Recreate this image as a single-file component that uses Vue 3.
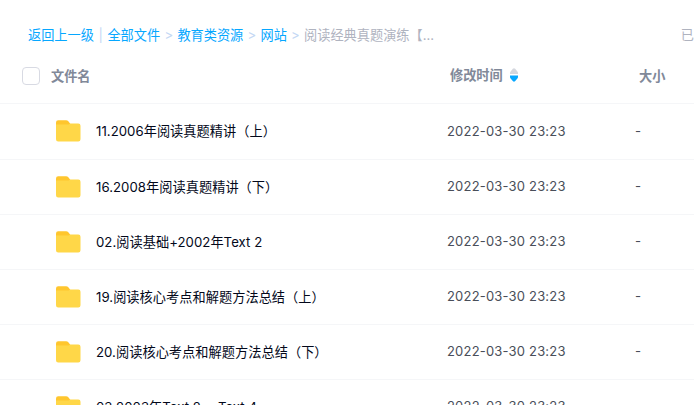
<script setup>
const crumbs = ['全部文件', '教育类资源', '网站']
const files = [
  '11.2006年阅读真题精讲（上）',
  '16.2008年阅读真题精讲（下）',
  '02.阅读基础+2002年Text 2',
  '19.阅读核心考点和解题方法总结（上）',
  '20.阅读核心考点和解题方法总结（下）',
  '03.2003年Text 2、 Text 4',
]
</script>

<template>
  <main class="page">
    <nav class="crumbs">
      <a>返回上一级</a><span class="bar">|</span>
      <template v-for="c in crumbs" :key="c"><a>{{ c }}</a><span class="gt">&gt;</span></template>
      <span class="current">阅读经典真题演练【...</span>
      <span class="loaded">已</span>
    </nav>
    <header class="head">
      <span class="check"></span>
      <span class="h-name">文件名</span>
      <span class="h-time">修改时间
        <svg class="sort" width="8" height="14" viewBox="0 0 8 14">
          <path d="M0 6V5Q0 4.2.6 3.4L2.8.7Q4-.4 5.2.7L7.4 3.4Q8 4.2 8 5V6Z" fill="#d4d7de" />
          <path d="M0 7.5H8V9Q8 9.8 7.4 10.5L5.2 13.1Q4 14.3 2.8 13.1L.6 10.5Q0 9.8 0 9Z" fill="#06a7ff" />
        </svg>
      </span>
      <span class="h-size">大小</span>
    </header>
    <section class="list">
      <div v-for="f in files" :key="f" class="row">
        <svg class="folder" width="26" height="22" viewBox="0 0 26 22">
          <path d="M1 2.5Q1 .3 3.2.3H11Q12.5.3 13.5 1.5L15.5 4V10H1Z" fill="#ffc62e" />
          <path d="M1 4.5H12.8Q13.5 4.5 14.2 4Q14.9 3.5 15.7 3.5H23.3Q25.5 3.5 25.5 5.7V19.3Q25.5 21.5 23.3 21.5H3.2Q1 21.5 1 19.3Z" fill="#ffd748" />
        </svg>
        <span class="name">{{ f }}</span>
        <span class="time">2022-03-30 23:23</span>
        <span class="size">-</span>
      </div>
    </section>
  </main>
</template>

<style>
body { background: #fff; }
</style>

<style scoped>
.page {
  width: 694px;
  height: 405px;
  overflow: hidden;
  font-family: Inter, "Noto Sans CJK SC", sans-serif;
  font-size: 13.2px;
  line-height: 20px;
  white-space: nowrap;
}
.crumbs {
  display: flex;
  height: 20px;
  padding: 25px 0 0 28px;
  color: #afb3bf;
}
.crumbs a { color: #06a7ff; }
.bar { width: 13.5px; text-align: center; color: #c4d8f4; }
.gt { width: 17.2px; text-align: center; color: #c4d8f4; }
.loaded { margin-left: auto; }
.head {
  display: flex;
  align-items: center;
  height: 55px;
  padding: 6px 0 0 22px;
  box-sizing: border-box;
  color: #818999;
  font-weight: 700;
}
.check {
  box-sizing: border-box;
  width: 18px;
  height: 18px;
  margin-right: 11px;
  border: 1px solid #d8dae3;
  border-radius: 4px;
}
.h-name { width: 399px; }
.h-time { display: flex; align-items: center; width: 189px; margin-top: -2px; }
.sort { flex: none; margin-left: 7px; }
.list { margin-top: 3px; }
.row {
  display: flex;
  align-items: center;
  box-sizing: border-box;
  height: 55px;
  padding-left: 55px;
  border-top: 1px solid #f5f6f8;
}
.row:first-child { height: 56px; padding-bottom: 2px; }
.folder { margin-right: 15px; }
.name { width: 351px; color: #03081a; letter-spacing: .04px; }
.time { width: 188px; padding-bottom: 2px; color: #494e59; font-size: 13px; letter-spacing: .19px; }
.size { padding-bottom: 2px; color: #494e59; }
.row:first-child .time,
.row:first-child .size { padding-bottom: 0; }
</style>
